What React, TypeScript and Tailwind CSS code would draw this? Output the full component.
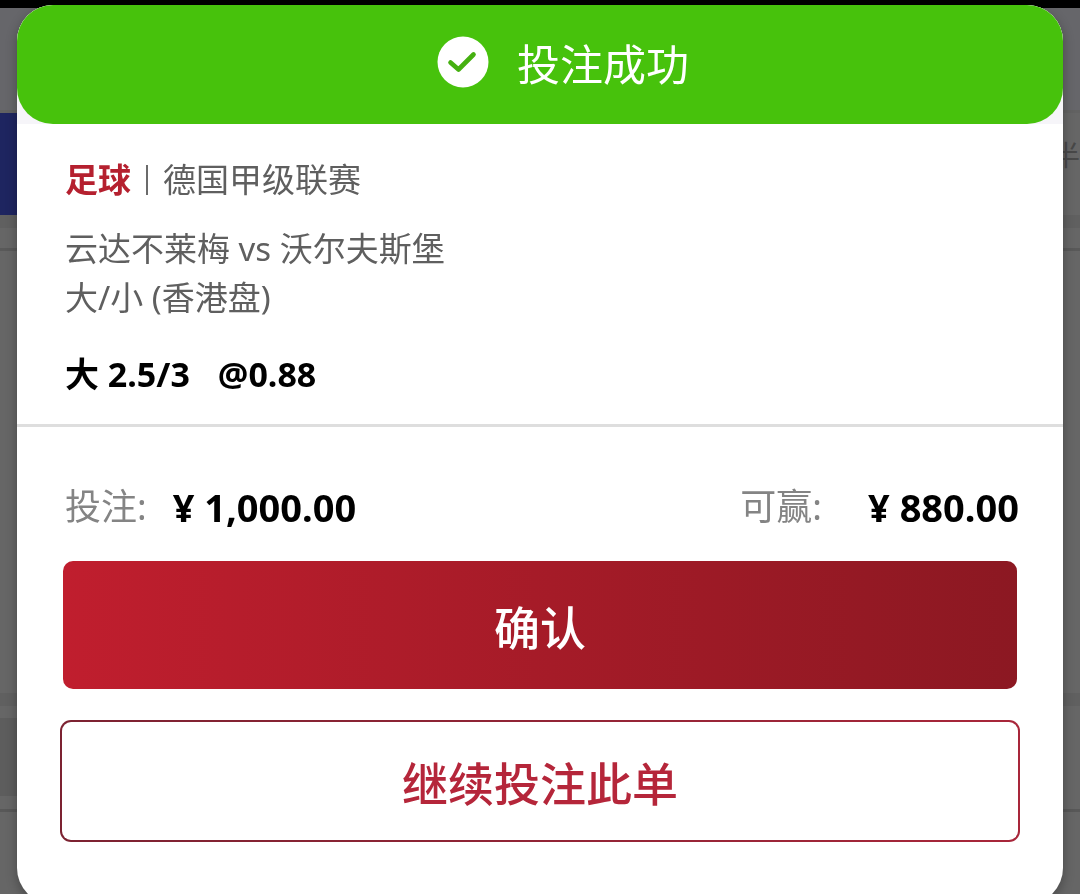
/**
 * Bet Success Dialog
 * Displayed over the match list after a bet has been placed
 */
import React from 'react';

const BetSuccessDialog: React.FC = () => {
  return (
    <div
      role="dialog"
      aria-labelledby="bet-success-title"
      className="fixed inset-x-[17px] top-[5px] rounded-[36px] bg-white shadow-[0_4px_12px_rgba(0,0,0,0.3)]"
    >
      {/* Success Banner */}
      <div className="rounded-t-[36px] bg-[#f6f5f9]">
        <header className="flex h-[119px] items-center justify-center gap-7 rounded-[36px] bg-[#47c20c] pl-[46px]">
          <svg viewBox="0 0 52 52" className="mb-1.5 h-[52px] w-[52px] shrink-0" aria-hidden="true">
            <circle cx="26" cy="26" r="25.5" fill="#ffffff" />
            <path
              d="M13.5 26.5 L21.5 33.5 L36.5 18.5"
              fill="none"
              stroke="#45b010"
              strokeWidth="4.6"
              strokeLinecap="round"
              strokeLinejoin="round"
            />
          </svg>
          <h1 id="bet-success-title" className="text-[43px] leading-[48px] font-normal text-white">
            投注成功
          </h1>
        </header>
      </div>

      {/* Bet Details */}
      <section className="border-b-[3px] border-[#dedede] px-12 pt-8 pb-[26px] text-[33px] text-[#5f5f5f]">
        <p className="flex items-center gap-[15px] leading-[48px]">
          <strong className="font-bold text-[#b5202f]">足球</strong>
          <span className="h-[30px] w-0.5 bg-[#6b6b6b]"></span>
          <span>德国甲级联赛</span>
        </p>
        <p className="mt-5 leading-[49px]">云达不莱梅 vs 沃尔夫斯堡</p>
        <p className="leading-[49px]">大/小 (香港盘)</p>
        <p className="mt-7 flex gap-7 text-[34px] leading-[48px] font-bold text-black">
          <span>大 2.5/3</span>
          <span>@0.88</span>
        </p>
      </section>

      {/* Amounts */}
      <dl className="flex flex-wrap justify-between pt-14 pr-11 pl-12 leading-[48px]">
        <div className="flex items-center gap-[26px]">
          <dt className="text-[36px] font-normal text-[#848484]">投注:</dt>
          <dd className="text-[38px] font-bold text-black">¥ 1,000.00</dd>
        </div>
        <div className="flex items-center gap-[46px]">
          <dt className="text-[36px] font-normal text-[#848484]">可赢:</dt>
          <dd className="text-[38px] font-bold text-black">¥ 880.00</dd>
        </div>
      </dl>

      {/* Action Buttons */}
      <div className="flex flex-col gap-[31px] px-[43px] pt-[30px] pb-[62px] text-[46px] leading-[64px] font-medium">
        <button
          type="button"
          className="mx-[3px] rounded-[10px] bg-linear-to-r from-[#c01e2e] to-[#8c1822] pt-[34px] pb-[30px] text-white"
        >
          确认
        </button>
        <div className="flex rounded-[11px] bg-linear-to-r from-[#7c2231] to-[#a8263a] p-0.5">
          <button type="button" className="flex-1 rounded-[9px] bg-white pt-[29px] pb-[25px] text-[#b5263a]">
            继续投注此单
          </button>
        </div>
      </div>
    </div>
  );
};

// Dimmed match list that stays behind the dialog
const MatchListBackdrop: React.FC = () => {
  return (
    <div aria-hidden="true" className="flex min-h-screen flex-col bg-[#666666]">
      <div className="h-2 bg-black"></div>
      <div className="h-[102px] bg-[#66666a]"></div>
      <div className="h-[3px] bg-[#626262]"></div>
      <div className="flex h-[102px] justify-between">
        <div className="w-1/2 bg-[#1e2560]"></div>
        <span className="pt-5 text-[28px] leading-[44px] text-[#484848]">半</span>
      </div>
      <div className="h-[13px] bg-[#606060]"></div>
      <div className="h-5"></div>
      <div className="h-[3px] bg-[#595959]"></div>
      <div className="h-[442px]"></div>
      <div className="h-[13px] bg-[#606060]"></div>
      <div className="h-3"></div>
      <div className="h-[78px] w-1/2 bg-[#5d5d5d]"></div>
      <div className="h-[13px]"></div>
      <div className="h-[3px] bg-[#585858]"></div>
    </div>
  );
};

const App: React.FC = () => {
  return (
    <main lang="zh-CN" className="font-['Noto_Sans','Noto_Sans_CJK_SC',sans-serif]">
      <MatchListBackdrop />
      <BetSuccessDialog />
    </main>
  );
};

export default App;
